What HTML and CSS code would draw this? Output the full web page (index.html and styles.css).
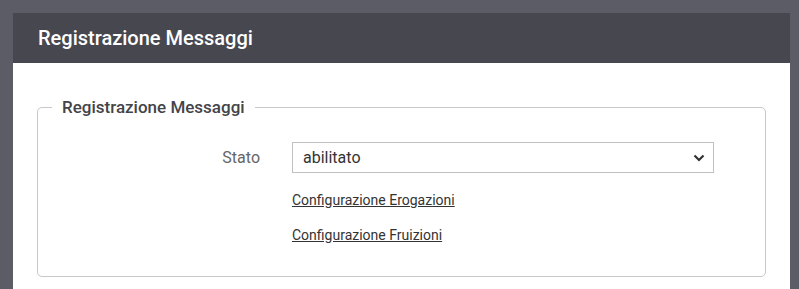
FILE: index.html
```html
<!DOCTYPE html>
<html lang="it">
<head>
<meta charset="utf-8">
<title>Registrazione Messaggi</title>
<link rel="stylesheet" href="styles.css">
</head>
<body>
<div class="page">
  <div class="panel">
    <div class="panel-header">Registrazione Messaggi</div>
    <div class="panel-body">
      <fieldset class="group">
        <legend class="group-title">Registrazione Messaggi</legend>
        <div class="row">
          <label class="row-label" for="stato">Stato</label>
          <div class="row-field">
            <div class="select" id="stato">
              <span class="select-value">abilitato</span>
              <svg class="select-arrow" width="12" height="8" viewBox="0 0 12 8"><path d="M1.5 1.5 L6 6 L10.5 1.5" fill="none" stroke="#333" stroke-width="2.2"/></svg>
            </div>
          </div>
        </div>
        <div class="row link-row">
          <div class="row-label"></div>
          <div class="row-field"><a class="link" href="#">Configurazione Erogazioni</a></div>
        </div>
        <div class="row link-row">
          <div class="row-label"></div>
          <div class="row-field"><a class="link" href="#">Configurazione Fruizioni</a></div>
        </div>
      </fieldset>
    </div>
  </div>
</div>
</body>
</html>
```
FILE: styles.css
```css
* { box-sizing: border-box; }
html, body { margin: 0; padding: 0; }
body {
  background: #5c5c66;
  font-family: Roboto, "Liberation Sans", sans-serif;
  width: 799px;
  height: 289px;
  overflow: hidden;
}
.page {
  padding: 13px 9px 0 13px;
}
.panel {
  background: #ffffff;
  height: 276px;
}
.panel-header {
  background: #474750;
  color: #ffffff;
  height: 50px;
  padding: 0 25px;
  display: flex;
  align-items: center;
  font-size: 20px;
  font-weight: 500;
}
.panel-body {
  padding: 34px 24px 0 24px;
}
.group {
  margin: 0;
  border: 1px solid #c8c8c8;
  border-radius: 5px;
  padding: 0 0 33px 0;
  min-width: 0;
}
.group-title {
  margin-left: 14px;
  padding: 0 10px;
  font-size: 17px;
  font-weight: 500;
  color: #444449;
}
.row {
  display: flex;
  align-items: center;
}
.row-label {
  width: 254px;
  text-align: right;
  font-size: 16px;
  color: #666666;
  padding-right: 32px;
  flex: none;
}
.row-field {
  width: 422px;
}
.row:first-of-type {
  margin-top: 25px;
}
.select {
  height: 31px;
  border: 1px solid #c0c0c0;
  display: flex;
  align-items: center;
  justify-content: space-between;
  padding: 0 8px 0 10px;
  font-size: 16px;
  color: #333333;
}
.select-arrow { display: block; }
.link-row { height: 18px; }
.link-row + .link-row { margin-top: 18px; }
.row + .link-row { margin-top: 17px; }
.link {
  font-size: 14px;
  color: #333333;
  text-decoration: underline;
}
```
